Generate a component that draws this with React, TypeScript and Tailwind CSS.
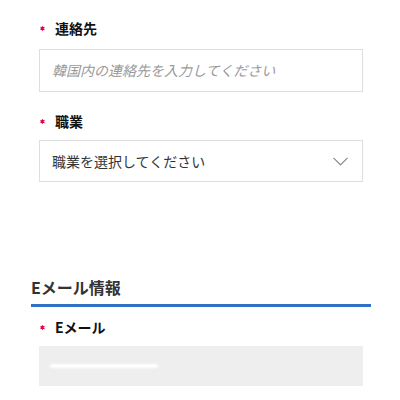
import React from 'react';

const font = { fontFamily: '"Noto Sans CJK JP", "Noto Sans", sans-serif' };

const Label: React.FC<{ text: string; className?: string }> = ({ text, className = '' }) => (
  <div className={`flex items-center h-5 ${className}`}>
    <span className="w-4 flex pl-[1px]">
      <svg width="5" height="5" viewBox="0 0 10 10" className="mt-[1px]">
        <path d="M5 0.5 V9.5 M1.1 2.75 L8.9 7.25 M1.1 7.25 L8.9 2.75" stroke="#e4003f" strokeWidth="2.4" />
      </svg>
    </span>
    <span className="text-[14px] font-bold text-[#111]">{text}</span>
  </div>
);

export default function App() {
  return (
    <div className="w-[400px] h-[400px] bg-white overflow-hidden" style={font}>
      <div className="ml-[31px] w-[340px] pt-[18px]">
        <div className="px-2">
          <Label text="連絡先" />
          <div className="mt-[11px] h-[43px] border border-[#dedede] flex items-center pl-3">
            <span className="text-[14px] italic text-[#9a9a9a]">韓国内の連絡先を入力してください</span>
          </div>

          <Label text="職業" className="mt-[19px]" />
          <div className="mt-[9px] h-[42px] border border-[#dedede] flex items-center justify-between pl-3 pr-[14px]">
            <span className="text-[14px] text-[#333]">職業を選択してください</span>
            <svg width="15" height="9" viewBox="0 0 15 9" fill="none">
              <path d="M0.5 0.8 L7.5 8 L14.5 0.8" stroke="#8a8a8a" strokeWidth="1.2" />
            </svg>
          </div>
        </div>

        <div className="mt-[93px] pb-[5px] border-b-[3px] border-[#2f6fc6]">
          <h2 className="text-[16px] leading-6 font-bold text-[#333]">Eメール情報</h2>
        </div>

        <div className="px-2">
          <Label text="Eメール" className="mt-[10px]" />
          <div className="mt-[9px] h-[40px] bg-[#eeeeee] flex items-center">
            <div className="ml-[11px] h-[4px] w-[108px] bg-white rounded-full blur-[1px]" />
          </div>
        </div>
      </div>
    </div>
  );
}
